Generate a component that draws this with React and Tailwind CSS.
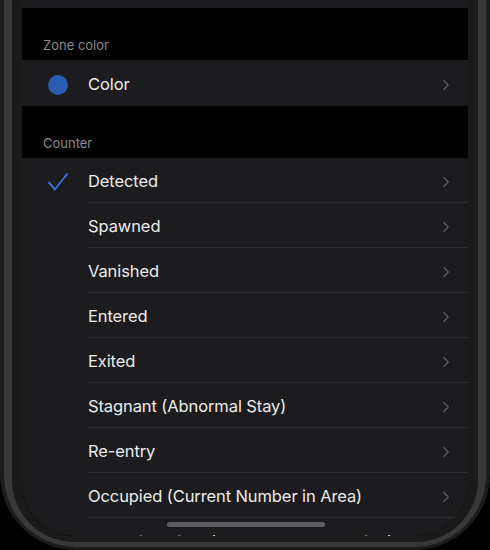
import { ChevronRight } from "lucide-react"

const counters = [
  "Detected",
  "Spawned",
  "Vanished",
  "Entered",
  "Exited",
  "Stagnant (Abnormal Stay)",
  "Re-entry",
  "Occupied (Current Number in Area)",
  "Occupied Time (Average Stay Duration)",
]

const Check = () => (
  <svg width="22" height="20" viewBox="0 0 22 20" fill="none">
    <path d="M2 10.5 L8 17.5 L20 2" stroke="#2f6fd6" strokeWidth="2" strokeLinecap="round" strokeLinejoin="round" />
  </svg>
)

const Row = ({ icon, label, last, tall }) => (
  <div className={`flex items-center ${tall ? "h-[46px]" : "h-[45px]"}`}>
    <div className="flex w-[66px] shrink-0 items-center justify-center pl-[5px] pt-[3px]">{icon}</div>
    <div
      className={`flex h-full flex-1 items-center justify-between pr-[13px] pt-[3px] ${
        last ? "" : "border-b border-[#2c2c2e]"
      }`}
    >
      <span className="text-[16.5px] tracking-[-0.1px] text-[#ececec]">{label}</span>
      <ChevronRight className="h-[18px] w-[18px] text-[#5b5b60]" strokeWidth={1.6} />
    </div>
  </div>
)

const SectionLabel = ({ children }) => (
  <div className="flex h-[52px] items-end pb-[5px] pl-[21px] text-[13px] text-[#8b8b90]">{children}</div>
)

export default function App() {
  return (
    <div className="h-[550px] w-[490px] bg-black" style={{ fontFamily: "Inter, 'Noto Sans', sans-serif" }}>
      <div className="h-full rounded-b-[76px] bg-[#1c1c1c] px-[4px] pb-[3px]">
        <div className="h-full rounded-b-[72px] bg-[#383838] px-[8px] pb-[5px]">
          <div className="h-full rounded-b-[62px] bg-[#1a1a1b] px-[10px] pb-[6px]">
            <div className="relative h-full overflow-hidden rounded-b-[52px] bg-black">
              <div className="h-[8px] bg-[#1c1c1e]" />
              <SectionLabel>Zone color</SectionLabel>
              <div className="bg-[#1c1c1e]">
                <Row icon={<div className="h-[20px] w-[20px] rounded-full bg-[#2a5cb3]" />} label="Color" last tall />
              </div>
              <SectionLabel>Counter</SectionLabel>
              <div className="bg-[#1c1c1e]">
                {counters.map((c, i) => (
                  <Row key={c} icon={i === 0 ? <Check /> : null} label={c} last={i === counters.length - 1} />
                ))}
              </div>
              <div className="absolute bottom-[9px] left-[145px] h-[5px] w-[158px] rounded-full bg-[#5c5c5e]" />
            </div>
          </div>
        </div>
      </div>
    </div>
  )
}
